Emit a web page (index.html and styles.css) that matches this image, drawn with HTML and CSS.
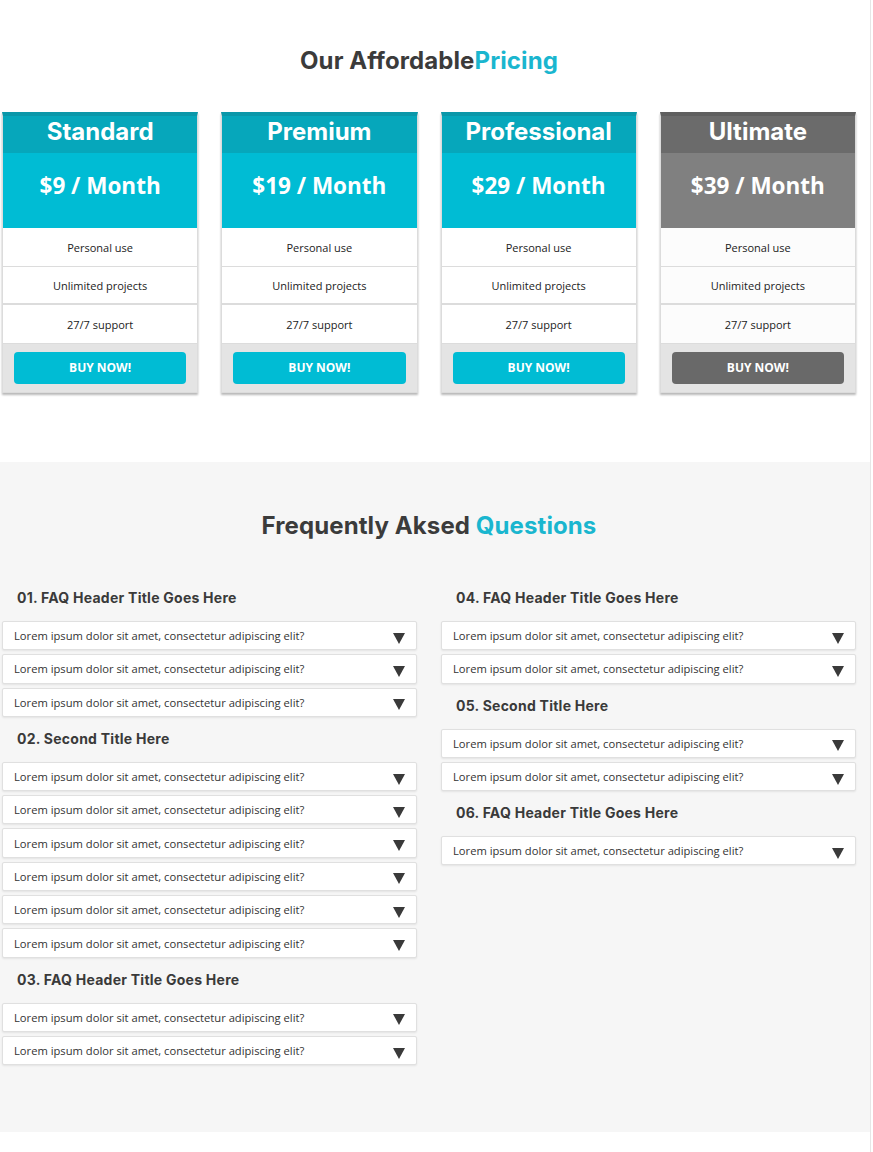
FILE: index.html
```html
<!DOCTYPE html>
<html lang="en">
<head>
<meta charset="utf-8">
<title>Pricing &amp; FAQ</title>
<link rel="stylesheet" href="styles.css">
</head>
<body>
<div class="page">
  <section class="pricing">
    <h2 class="section-title">Our Affordable<span class="accent">Pricing</span></h2>
    <div class="plans">
      <div class="plan">
        <div class="plan-name">Standard</div>
        <div class="plan-price">$9 / Month</div>
        <ul class="plan-features">
          <li>Personal use</li>
          <li>Unlimited projects</li>
          <li>27/7 support</li>
        </ul>
        <div class="plan-foot"><a class="buy">BUY NOW!</a></div>
      </div>
      <div class="plan">
        <div class="plan-name">Premium</div>
        <div class="plan-price">$19 / Month</div>
        <ul class="plan-features">
          <li>Personal use</li>
          <li>Unlimited projects</li>
          <li>27/7 support</li>
        </ul>
        <div class="plan-foot"><a class="buy">BUY NOW!</a></div>
      </div>
      <div class="plan">
        <div class="plan-name">Professional</div>
        <div class="plan-price">$29 / Month</div>
        <ul class="plan-features">
          <li>Personal use</li>
          <li>Unlimited projects</li>
          <li>27/7 support</li>
        </ul>
        <div class="plan-foot"><a class="buy">BUY NOW!</a></div>
      </div>
      <div class="plan plan-dark">
        <div class="plan-name">Ultimate</div>
        <div class="plan-price">$39 / Month</div>
        <ul class="plan-features">
          <li>Personal use</li>
          <li>Unlimited projects</li>
          <li>27/7 support</li>
        </ul>
        <div class="plan-foot"><a class="buy">BUY NOW!</a></div>
      </div>
    </div>
  </section>

  <section class="faq">
    <h2 class="section-title">Frequently Aksed <span class="accent">Questions</span></h2>
    <div class="faq-cols">
      <div class="faq-col">
        <h3 class="faq-group">01. FAQ Header Title Goes Here</h3>
        <div class="q">Lorem ipsum dolor sit amet, consectetur adipiscing elit?<svg class="arrow" viewBox="0 0 12 11"><polygon points="0,0 12,0 6,11"/></svg></div>
        <div class="q">Lorem ipsum dolor sit amet, consectetur adipiscing elit?<svg class="arrow" viewBox="0 0 12 11"><polygon points="0,0 12,0 6,11"/></svg></div>
        <div class="q">Lorem ipsum dolor sit amet, consectetur adipiscing elit?<svg class="arrow" viewBox="0 0 12 11"><polygon points="0,0 12,0 6,11"/></svg></div>
        <h3 class="faq-group">02. Second Title Here</h3>
        <div class="q">Lorem ipsum dolor sit amet, consectetur adipiscing elit?<svg class="arrow" viewBox="0 0 12 11"><polygon points="0,0 12,0 6,11"/></svg></div>
        <div class="q">Lorem ipsum dolor sit amet, consectetur adipiscing elit?<svg class="arrow" viewBox="0 0 12 11"><polygon points="0,0 12,0 6,11"/></svg></div>
        <div class="q">Lorem ipsum dolor sit amet, consectetur adipiscing elit?<svg class="arrow" viewBox="0 0 12 11"><polygon points="0,0 12,0 6,11"/></svg></div>
        <div class="q">Lorem ipsum dolor sit amet, consectetur adipiscing elit?<svg class="arrow" viewBox="0 0 12 11"><polygon points="0,0 12,0 6,11"/></svg></div>
        <div class="q">Lorem ipsum dolor sit amet, consectetur adipiscing elit?<svg class="arrow" viewBox="0 0 12 11"><polygon points="0,0 12,0 6,11"/></svg></div>
        <div class="q">Lorem ipsum dolor sit amet, consectetur adipiscing elit?<svg class="arrow" viewBox="0 0 12 11"><polygon points="0,0 12,0 6,11"/></svg></div>
        <h3 class="faq-group">03. FAQ Header Title Goes Here</h3>
        <div class="q">Lorem ipsum dolor sit amet, consectetur adipiscing elit?<svg class="arrow" viewBox="0 0 12 11"><polygon points="0,0 12,0 6,11"/></svg></div>
        <div class="q">Lorem ipsum dolor sit amet, consectetur adipiscing elit?<svg class="arrow" viewBox="0 0 12 11"><polygon points="0,0 12,0 6,11"/></svg></div>
      </div>
      <div class="faq-col">
        <h3 class="faq-group">04. FAQ Header Title Goes Here</h3>
        <div class="q">Lorem ipsum dolor sit amet, consectetur adipiscing elit?<svg class="arrow" viewBox="0 0 12 11"><polygon points="0,0 12,0 6,11"/></svg></div>
        <div class="q">Lorem ipsum dolor sit amet, consectetur adipiscing elit?<svg class="arrow" viewBox="0 0 12 11"><polygon points="0,0 12,0 6,11"/></svg></div>
        <h3 class="faq-group">05. Second Title Here</h3>
        <div class="q">Lorem ipsum dolor sit amet, consectetur adipiscing elit?<svg class="arrow" viewBox="0 0 12 11"><polygon points="0,0 12,0 6,11"/></svg></div>
        <div class="q">Lorem ipsum dolor sit amet, consectetur adipiscing elit?<svg class="arrow" viewBox="0 0 12 11"><polygon points="0,0 12,0 6,11"/></svg></div>
        <h3 class="faq-group">06. FAQ Header Title Goes Here</h3>
        <div class="q">Lorem ipsum dolor sit amet, consectetur adipiscing elit?<svg class="arrow" viewBox="0 0 12 11"><polygon points="0,0 12,0 6,11"/></svg></div>
      </div>
    </div>
  </section>
</div>
</body>
</html>
```

FILE: styles.css
```css
* { box-sizing: border-box; }

html, body {
  margin: 0;
  padding: 0;
  background: #fff;
}

body {
  font-family: "Open Sans", "Liberation Sans", sans-serif;
  color: #222;
}

.page {
  width: 871px;
  border-right: 1px solid #e6e6e6;
  min-height: 1152px;
}

.section-title {
  margin: 0;
  font-family: Inter, "Liberation Sans", sans-serif;
  font-weight: 700;
  font-size: 24px;
  line-height: 28px;
  color: #3b3b3b;
  text-align: center;
  letter-spacing: 0.1px;
}

.accent { color: #1ab6cf; }

/* ---------- Pricing ---------- */
.pricing {
  padding: 47px 14px 69px 2px;
}

.plans {
  margin-top: 37px;
  display: flex;
  gap: 23px;
}

.plan {
  flex: 1;
  border: 1px solid #dcdcdc;
  border-top: 4px solid #0a97a9;
  background: #fff;
  box-shadow: 0 2px 2px rgba(0, 0, 0, 0.28);
}

.plan-name {
  height: 37px;
  background: #06a7bb;
  color: #fff;
  font-family: Inter, "Liberation Sans", sans-serif;
  font-weight: 700;
  font-size: 24px;
  line-height: 32px;
  text-align: center;
}

.plan-price {
  height: 75px;
  background: #00bcd4;
  color: #fff;
  font-family: "Open Sans", "Liberation Sans", sans-serif;
  font-weight: 700;
  font-size: 22.5px;
  line-height: 65px;
  text-align: center;
}

.plan-features {
  list-style: none;
  margin: 0;
  padding: 0;
}

.plan-features li {
  height: 39px;
  border-bottom: 1px solid #dcdcdc;
  font-size: 11px;
  line-height: 39px;
  text-align: center;
  color: #222;
}

.plan-features li:nth-child(2) { border-bottom-width: 2px; height: 38px; line-height: 37px; }

.plan-foot {
  background: #e4e4e4;
  padding: 8px 11px 8px;
}

.buy {
  display: block;
  height: 32px;
  border-radius: 4px;
  background: #00bcd4;
  color: #fff;
  font-weight: 700;
  font-size: 12px;
  line-height: 31px;
  text-align: center;
  cursor: pointer;
}

.plan-dark { border-top-color: #5f5f5f; }
.plan-dark .plan-name { background: #6b6b6b; }
.plan-dark .plan-price { background: #808080; }
.plan-dark .plan-features li { background: #fcfcfc; }
.plan-dark .buy { background: #696969; }

/* ---------- FAQ ---------- */
.faq {
  background: #f6f6f6;
  padding: 50px 14px 63px 2px;
}

.faq-cols {
  margin-top: 41px;
  display: flex;
  gap: 24px;
  align-items: flex-start;
}

.faq-col {
  flex: 1;
  display: flex;
  flex-direction: column;
}

.faq-group {
  margin: 0;
  padding: 8px 0 14px 15px;
  font-family: Inter, "Liberation Sans", sans-serif;
  font-weight: 700;
  font-size: 14px;
  line-height: 18px;
  letter-spacing: 0.25px;
  color: #3a3a3a;
}

.q + .faq-group { padding-top: 9px; }

.q {
  height: 29.3px;
  margin-bottom: 4px;
  background: #fff;
  border: 1px solid #e0e0e0;
  border-radius: 2px;
  box-shadow: 0 1px 2px rgba(0, 0, 0, 0.08);
  padding: 0 11px 0 11px;
  display: flex;
  align-items: center;
  justify-content: space-between;
  font-size: 11.2px;
  color: #333;
}

.arrow {
  width: 12px;
  height: 11px;
  fill: #3a3a3a;
  margin-top: 5px;
}
```
